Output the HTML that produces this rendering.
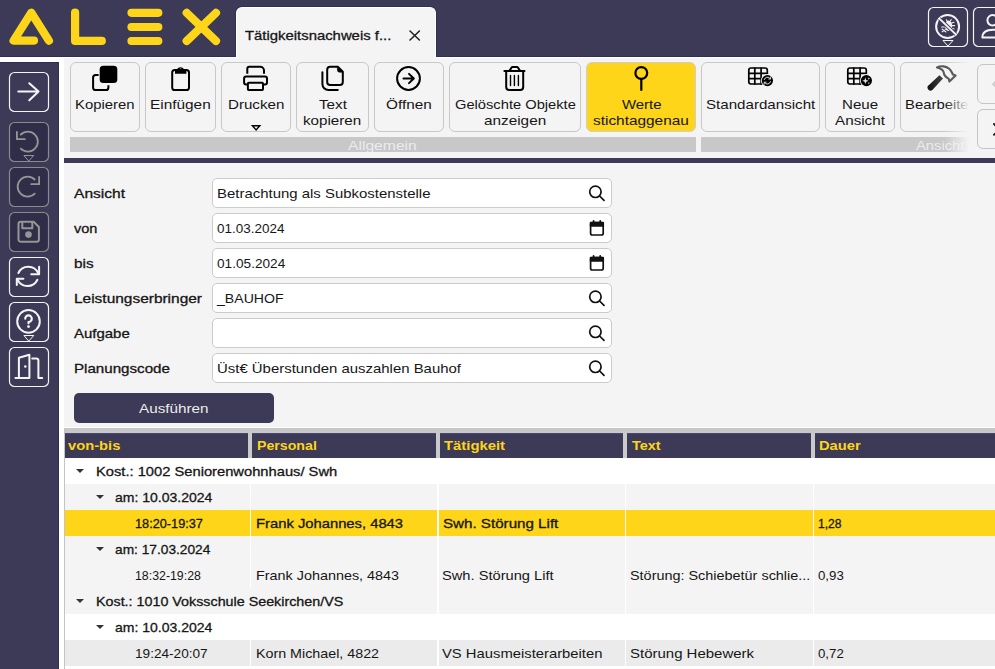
<!DOCTYPE html>
<html><head><meta charset="utf-8"><title>ALEX</title>
<style>
*{box-sizing:border-box;margin:0;padding:0}
html,body{width:995px;height:669px;overflow:hidden;background:#fff;font-family:"Liberation Sans",sans-serif;font-size:13px;color:#161616}
.abs{position:absolute}
#hdr{position:absolute;left:0;top:0;width:995px;height:57px;background:#3c3a57;border-bottom:1px solid #302e52}
#tab{position:absolute;left:236px;top:7px;width:200px;height:50px;background:#f4f4f4;border:1px solid #fff;border-bottom:none;border-radius:6px 6px 0 0;box-shadow:0 0 0 1px #312f53}
#tabb{position:absolute;left:0;top:57px;width:995px;height:1px;background:#fff}
#tabb:after{content:"";position:absolute;left:237px;top:0;width:198px;height:1px;background:#f4f4f4}
#side{position:absolute;left:0;top:62px;width:59px;height:607px;background:#3c3a57;border-top:1px solid #302e52;border-right:1px solid #302e52}
#main{position:absolute;left:64px;top:58px;width:931px;height:369px;background:#f4f4f4}
.tb{position:absolute;top:62px;height:70px;border:1px solid #c8c8c8;border-radius:6px;background:#f4f4f4}
.tb.on{background:#fed518;border-color:#cdcdd6}
.grp{position:absolute;top:137px;height:15px;background:#c8c8c8}
#fade{position:absolute;left:944px;top:58px;width:28px;height:96px;background:linear-gradient(to right,rgba(244,244,244,0),#f4f4f4 90%)}
#fade2{position:absolute;left:971px;top:58px;width:24px;height:96px;background:#f4f4f4}
.nav{position:absolute;left:977px;width:30px;height:40px;border:1px solid #c4c4c4;border-radius:6px;background:#f4f4f4}
#dline{position:absolute;left:64px;top:158px;width:931px;height:5px;background:#3c3a57}
.finput{position:absolute;left:212px;width:400px;height:30px;border:1px solid #cbcbcb;border-radius:5px;background:#fff}
#run{position:absolute;left:74px;top:393px;width:200px;height:30px;border-radius:5px;background:#3c3a57}
.t{position:absolute;display:block;transform-origin:0 50%;white-space:nowrap}
.m{-webkit-text-stroke:0.3px currentColor}
#grid{position:absolute;left:64px;top:427px;width:931px;height:242px;background:#fff;border-top:1px solid #fff}
#grid:before{content:"";position:absolute;left:0;top:0;width:931px;height:5px;background:#c8c8c8;border-bottom:1px solid #d8d8d8}
.th{position:absolute;top:433px;height:25px;background:#3c3a57;border-top:1px solid #4a4873}
.row{position:absolute;left:65px;width:930px;height:26px}
.vs{position:absolute;background:#fff}
.tri{position:absolute;width:0;height:0;border-left:4px solid transparent;border-right:4px solid transparent;border-top:4px solid #333}
#ico{position:absolute;left:0;top:0}
</style></head><body>
<div id="hdr"></div><div id="tab"></div><div id="tabb"></div><div id="side"></div><div id="main"></div>
<div class="tb " style="left:70px;width:70px"></div>
<div class="tb " style="left:145px;width:71px"></div>
<div class="tb " style="left:221px;width:70px"></div>
<div class="tb " style="left:296px;width:73px"></div>
<div class="tb " style="left:374px;width:70px"></div>
<div class="tb " style="left:449px;width:132px"></div>
<div class="tb on" style="left:586px;width:110px"></div>
<div class="tb " style="left:701px;width:119px"></div>
<div class="tb " style="left:825px;width:70px"></div>
<div class="tb " style="left:900px;width:82px"></div>
<div class="grp" style="left:70px;width:626px"></div><div class="grp" style="left:701px;width:294px"></div>
<span class="t " style="left:75.30px;top:97px;line-height:15px;font-size:13px;transform:scaleX(1.1442);">Kopieren</span>
<span class="t " style="left:150.00px;top:97px;line-height:15px;font-size:13px;transform:scaleX(1.1832);">Einfügen</span>
<span class="t " style="left:228.00px;top:97px;line-height:15px;font-size:13px;transform:scaleX(1.1632);">Drucken</span>
<span class="t " style="left:318.50px;top:97px;line-height:15px;font-size:13px;transform:scaleX(1.1681);">Text</span>
<span class="t " style="left:303.30px;top:113px;line-height:15px;font-size:13px;transform:scaleX(1.1663);">kopieren</span>
<span class="t " style="left:386.00px;top:97px;line-height:15px;font-size:13px;transform:scaleX(1.1778);">Öffnen</span>
<span class="t " style="left:454.50px;top:97px;line-height:15px;font-size:13px;transform:scaleX(1.1300);">Gelöschte Objekte</span>
<span class="t " style="left:483.80px;top:113px;line-height:15px;font-size:13px;transform:scaleX(1.1780);">anzeigen</span>
<span class="t " style="left:621.50px;top:97px;line-height:15px;font-size:13px;transform:scaleX(1.1483);">Werte</span>
<span class="t " style="left:593.00px;top:113px;line-height:15px;font-size:13px;transform:scaleX(1.1840);">stichtaggenau</span>
<span class="t " style="left:706.10px;top:97px;line-height:15px;font-size:13px;transform:scaleX(1.1628);">Standardansicht</span>
<span class="t " style="left:842.30px;top:97px;line-height:15px;font-size:13px;transform:scaleX(1.1608);">Neue</span>
<span class="t " style="left:834.80px;top:113px;line-height:15px;font-size:13px;transform:scaleX(1.1714);">Ansicht</span>
<span class="t " style="left:905.00px;top:97px;line-height:15px;font-size:13px;transform:scaleX(1.1431);">Bearbeiten</span>
<span class="t " style="left:348.20px;top:138px;line-height:15px;font-size:13px;transform:scaleX(1.2049);color:#ebebf0;">Allgemein</span>
<span class="t " style="left:916.20px;top:138px;line-height:15px;font-size:13px;transform:scaleX(1.1362);color:#ebebf0;">Ansicht</span>
<div class="abs" style="left:64px;top:152px;width:931px;height:6px;background:#f4f4f4"></div>
<div id="fade"></div><div id="fade2"></div>
<div class="nav" style="top:64px"></div><div class="nav" style="top:109px"></div>
<div id="dline"></div>
<span class="t m" style="left:244.90px;top:28px;line-height:15px;font-size:13px;transform:scaleX(1.1439);">Tätigkeitsnachweis f...</span>
<div class="finput" style="top:178px"></div>
<span class="t m" style="left:74.00px;top:186px;line-height:15px;font-size:13px;transform:scaleX(1.1972);">Ansicht</span>
<span class="t " style="left:216.80px;top:186px;line-height:15px;font-size:13px;transform:scaleX(1.1492);">Betrachtung als Subkostenstelle</span>
<div class="finput" style="top:213px"></div>
<span class="t m" style="left:74.00px;top:221px;line-height:15px;font-size:13px;transform:scaleX(1.1143);">von</span>
<span class="t " style="left:216.80px;top:221px;line-height:15px;font-size:13px;transform:scaleX(1.0353);">01.03.2024</span>
<div class="finput" style="top:248px"></div>
<span class="t m" style="left:74.00px;top:256px;line-height:15px;font-size:13px;transform:scaleX(1.1807);">bis</span>
<span class="t " style="left:216.80px;top:256px;line-height:15px;font-size:13px;transform:scaleX(1.0492);">01.05.2024</span>
<div class="finput" style="top:283px"></div>
<span class="t m" style="left:74.00px;top:291px;line-height:15px;font-size:13px;transform:scaleX(1.1885);">Leistungserbringer</span>
<span class="t " style="left:217.02px;top:291px;line-height:15px;font-size:13px;transform:scaleX(1.0844);">_BAUHOF</span>
<div class="finput" style="top:318px"></div>
<span class="t m" style="left:74.00px;top:326px;line-height:15px;font-size:13px;transform:scaleX(1.1508);">Aufgabe</span>
<div class="finput" style="top:353px"></div>
<span class="t m" style="left:74.00px;top:361px;line-height:15px;font-size:13px;transform:scaleX(1.1638);">Planungscode</span>
<span class="t " style="left:216.80px;top:361px;line-height:15px;font-size:13px;transform:scaleX(1.1482);">Üst€ Überstunden auszahlen Bauhof</span>
<div id="run"></div>
<span class="t " style="left:139.20px;top:401px;line-height:15px;font-size:13px;transform:scaleX(1.1720);color:#ececec;">Ausführen</span>
<div id="grid"></div>
<div class="abs" style="left:64px;top:433px;width:931px;height:25px;background:#cacaca"></div>
<div class="th" style="left:65px;width:183px"></div>
<div class="th" style="left:252px;width:184px"></div>
<div class="th" style="left:440px;width:183px"></div>
<div class="th" style="left:627px;width:184px"></div>
<div class="th" style="left:815px;width:180px"></div>
<span class="t " style="left:68.40px;top:438px;line-height:15px;font-size:13px;transform:scaleX(1.1320);font-weight:bold;color:#fed518;">von-bis</span>
<span class="t " style="left:256.60px;top:438px;line-height:15px;font-size:13px;transform:scaleX(1.0893);font-weight:bold;color:#fed518;">Personal</span>
<span class="t " style="left:443.70px;top:438px;line-height:15px;font-size:13px;transform:scaleX(1.1421);font-weight:bold;color:#fed518;">Tätigkeit</span>
<span class="t " style="left:631.80px;top:438px;line-height:15px;font-size:13px;transform:scaleX(1.1085);font-weight:bold;color:#fed518;">Text</span>
<span class="t " style="left:818.70px;top:438px;line-height:15px;font-size:13px;transform:scaleX(1.1304);font-weight:bold;color:#fed518;">Dauer</span>
<div class="row" style="top:458px;background:#fff"></div>
<div class="row" style="top:484px;background:#f4f4f4"></div>
<div class="row" style="top:510px;background:#fed518"></div>
<div class="row" style="top:536px;background:#f4f4f4"></div>
<div class="row" style="top:562px;background:#f4f4f4"></div>
<div class="row" style="top:588px;background:#f4f4f4"></div>
<div class="row" style="top:614px;background:#fff"></div>
<div class="row" style="top:640px;background:#ebebeb"></div>
<div class="vs" style="left:250px;width:1px;top:484px;height:130px"></div>
<div class="vs" style="left:250px;width:1px;top:640px;height:26px"></div>
<div class="vs" style="left:437px;width:2px;top:484px;height:130px"></div>
<div class="vs" style="left:437px;width:2px;top:640px;height:26px"></div>
<div class="vs" style="left:625px;width:1px;top:484px;height:130px"></div>
<div class="vs" style="left:625px;width:1px;top:640px;height:26px"></div>
<div class="vs" style="left:812.5px;width:1.5px;top:484px;height:130px"></div>
<div class="vs" style="left:812.5px;width:1.5px;top:640px;height:26px"></div>
<div class="abs" style="left:250px;top:588px;width:1px;height:26px;background:#f4f4f4"></div>
<div class="tri" style="left:76px;top:469px"></div>
<span class="t m" style="left:95.80px;top:464px;line-height:15px;font-size:13px;transform:scaleX(1.1313);">Kost.: 1002 Seniorenwohnhaus/ Swh</span>
<div class="tri" style="left:96px;top:495px"></div>
<span class="t m" style="left:114.60px;top:490px;line-height:15px;font-size:13px;transform:scaleX(1.0775);">am: 10.03.2024</span>
<span class="t m" style="left:135.20px;top:516px;line-height:15px;font-size:13px;transform:scaleX(0.9784);">18:20-19:37</span>
<span class="t m" style="left:255.80px;top:516px;line-height:15px;font-size:13px;transform:scaleX(1.1368);">Frank Johannes, 4843</span>
<span class="t m" style="left:442.90px;top:516px;line-height:15px;font-size:13px;transform:scaleX(1.1646);">Swh. Störung Lift</span>
<span class="t m" style="left:817.70px;top:516px;line-height:15px;font-size:13px;transform:scaleX(0.9289);">1,28</span>
<div class="tri" style="left:96px;top:547px"></div>
<span class="t m" style="left:114.60px;top:542px;line-height:15px;font-size:13px;transform:scaleX(1.0554);">am: 17.03.2024</span>
<span class="t " style="left:135.20px;top:568px;line-height:15px;font-size:13px;transform:scaleX(0.9496);">18:32-19:28</span>
<span class="t " style="left:255.80px;top:568px;line-height:15px;font-size:13px;transform:scaleX(1.1059);">Frank Johannes, 4843</span>
<span class="t " style="left:442.30px;top:568px;line-height:15px;font-size:13px;transform:scaleX(1.1273);">Swh. Störung Lift</span>
<span class="t " style="left:630.00px;top:568px;line-height:15px;font-size:13px;transform:scaleX(1.1089);">Störung: Schiebetür schlie...</span>
<span class="t " style="left:817.60px;top:568px;line-height:15px;font-size:13px;transform:scaleX(1.0198);">0,93</span>
<div class="tri" style="left:76px;top:599px"></div>
<span class="t m" style="left:95.80px;top:594px;line-height:15px;font-size:13px;transform:scaleX(1.1001);">Kost.: 1010 Voksschule Seekirchen/VS</span>
<div class="tri" style="left:96px;top:625px"></div>
<span class="t m" style="left:114.60px;top:620px;line-height:15px;font-size:13px;transform:scaleX(1.0775);">am: 10.03.2024</span>
<span class="t " style="left:135.20px;top:646px;line-height:15px;font-size:13px;transform:scaleX(1.0476);">19:24-20:07</span>
<span class="t " style="left:255.80px;top:646px;line-height:15px;font-size:13px;transform:scaleX(1.0982);">Korn Michael, 4822</span>
<span class="t " style="left:442.30px;top:646px;line-height:15px;font-size:13px;transform:scaleX(1.1384);">VS Hausmeisterarbeiten</span>
<span class="t " style="left:630.00px;top:646px;line-height:15px;font-size:13px;transform:scaleX(1.1521);">Störung Hebewerk</span>
<span class="t " style="left:817.60px;top:646px;line-height:15px;font-size:13px;transform:scaleX(1.0198);">0,72</span>
<div class="abs" style="left:64px;top:428px;width:1px;height:241px;background:#c4c4c4"></div>
<svg id="ico" width="995" height="669" viewBox="0 0 995 669" fill="none" stroke-linecap="round" stroke-linejoin="round">
<defs>
<linearGradient id="hg" x1="0" y1="0" x2="1" y2="0"><stop offset="0" stop-color="#111"/><stop offset="1" stop-color="#444"/></linearGradient>
</defs>
<!-- logo -->
<g stroke="#fed518" stroke-width="8.2">
<path d="M48.9 40.6 L31.3 12.8 L13.6 40.6 H34"/>
<path d="M75.1 12.6 V40.9 H101.8"/>
<path d="M131.5 12.8 H158.3 M131.5 27 H158.3 M131.5 41 H158.3"/>
<path d="M186.7 12.9 L216 41 M216 12.9 L186.7 41"/>
</g>
<!-- tab close X -->
<path d="M410 31 L419.4 40 M419.4 31 L410 40" stroke="#1d1d1d" stroke-width="1.5"/>
<!-- top right buttons -->
<g stroke="#f4f4f4">
<rect x="928.5" y="7.5" width="39" height="39" rx="5" stroke-width="1.2"/>
<rect x="973.5" y="7.5" width="39" height="39" rx="5" stroke-width="1.2"/>
<circle cx="947.6" cy="26.5" r="11.5" stroke-width="2"/>
<path d="M939.4 18.6 L955.8 34.4" stroke-width="2"/>
<path d="M943.4 40.5 H953 L948.2 45.8 Z" stroke-width="1" stroke-linejoin="miter"/>
<circle cx="992.6" cy="20.3" r="5.2" stroke-width="2"/>
<path d="M982.4 37.5 C982.4 32 987 29.8 993 29.8 H996 V37.5 Z" stroke-width="2"/>
</g>
<!-- bug -->
<g fill="#f4f4f4" stroke="#f4f4f4" stroke-width="1.1">
<ellipse cx="948.5" cy="25.8" rx="3.6" ry="5.2" stroke="none"/>
<path d="M947 20.8 L946.4 19.8 M950.4 20.8 L951.2 19.6 M951.6 23 L954 22.2 M952 25.6 H954.6 M951.6 28.2 L954 29 M944.4 27 H941.6 M945.4 29.6 L942.2 31.8 M942.2 29.2 L946 32" fill="none"/>
</g>
<path d="M939.4 18.6 L955.8 34.4" stroke="#3c3a57" stroke-width="3.6" stroke-linecap="butt"/>
<path d="M939.4 18.6 L955.8 34.4" stroke="#f4f4f4" stroke-width="2"/>
<!-- sidebar buttons -->
<g stroke-width="1.2">
<rect x="9.5" y="72.5" width="39" height="39" rx="5" stroke="#f4f4f4"/>
<rect x="9.5" y="122.5" width="39" height="39" rx="5" stroke="#8a8a8c" fill="#2f2d48"/>
<rect x="9.5" y="167.5" width="39" height="39" rx="5" stroke="#8a8a8c" fill="#2f2d48"/>
<rect x="9.5" y="212.5" width="39" height="39" rx="5" stroke="#8a8a8c" fill="#2f2d48"/>
<rect x="9.5" y="257.5" width="39" height="39" rx="5" stroke="#f4f4f4"/>
<rect x="9.5" y="302.5" width="39" height="39" rx="5" stroke="#f4f4f4"/>
<rect x="9.5" y="347.5" width="39" height="39" rx="5" stroke="#f4f4f4"/>
</g>
<!-- arrow right -->
<path d="M18.3 91.5 H38.5 M29.3 83.3 L38.5 91.5 L29.3 100.3" stroke="#f4f4f4" stroke-width="2.1"/>
<!-- undo -->
<g stroke="#959595" stroke-width="1.8">
<path d="M16.9 131.8 V139.2 H24.8"/>
<path d="M20.8 134.5 A10 10 0 1 1 20.8 148.7"/>
<path d="M24.3 155.5 H33.8 L29 160.8 Z" stroke-width="1" stroke-linejoin="miter"/>
<!-- redo -->
<path d="M39.1 176.8 V184.2 H31.2"/>
<path d="M34.7 179.5 A10 10 0 1 0 34.7 193.7"/>
<!-- save -->
<path d="M18.5 224 a2.3 2.3 0 0 1 2.3 -2.3 H33.6 L38.9 227 V239.5 a2.3 2.3 0 0 1 -2.3 2.3 H20.8 a2.3 2.3 0 0 1 -2.3 -2.3 Z" stroke-width="2"/>
<path d="M22.3 222 V228.2 H32.3 V222" stroke-width="2"/>
<circle cx="28.5" cy="234.6" r="3.3" fill="#959595" stroke="none"/>
</g>
<!-- refresh -->
<g stroke="#f4f4f4" stroke-width="2">
<path d="M39.1 266.8 V274.3 H31.2"/>
<path d="M18.4 273 A10.9 10.9 0 0 1 38.3 273.4"/>
<path d="M16.8 285 V278.8 H23.4"/>
<path d="M37.4 279.8 A10.9 10.9 0 0 1 17.6 279.6"/>
<!-- help -->
<circle cx="28.5" cy="321.4" r="11.3"/>
<path d="M25.2 318.6 A3.3 3.3 0 1 1 28.5 322 V323.3" stroke-width="2.2"/>
<circle cx="28.5" cy="326.6" r="1.4" fill="#f4f4f4" stroke="none"/>
<path d="M24.3 335.5 H33.8 L29 340.8 Z" stroke-width="1" stroke-linejoin="miter"/>
<!-- door -->
<path d="M15.4 377.9 H29.4 M18.9 377.9 V357.8 L29.4 354.8 V377.9"/>
<path d="M32.2 358.5 H36.4 a2 2 0 0 1 2 2 V377.9 H42.2"/>
<circle cx="25.3" cy="366.5" r="1.3" fill="#f4f4f4" stroke="none"/>
</g>
<!-- toolbar icons -->
<g stroke="#000" stroke-width="2">
<!-- copy -->
<rect x="99.7" y="65.8" width="17.6" height="17.3" rx="3.6" fill="#000" stroke="none"/>
<path d="M98.6 74.9 H95.7 a2.6 2.6 0 0 0 -2.6 2.6 V87.4 a2.6 2.6 0 0 0 2.6 2.6 H105.8 a2.6 2.6 0 0 0 2.6 -2.6 V85.2" stroke-linecap="butt"/>
<!-- clipboard -->
<rect x="172.2" y="69.9" width="16.8" height="20.1" rx="2.6"/>
<path d="M175 73.7 V70.2 H176.9 A3.7 3.7 0 0 1 184.1 70.2 H186.4 V73.7 Z M180.5 68.6 a1.15 1.15 0 1 0 0 2.3 a1.15 1.15 0 1 0 0 -2.3 Z" fill="#000" fill-rule="evenodd" stroke="none"/>
<!-- printer -->
<path d="M247.3 73.8 V68.8 a2 2 0 0 1 2 -2 H260.2 a3.8 3.8 0 0 1 3.8 3.8 V73.8" stroke-linecap="butt"/>
<path d="M248 84.6 H246.1 a2 2 0 0 1 -2 -2 V78.5 a2 2 0 0 1 2 -2 H265 a2 2 0 0 1 2 2 V82.6 a2 2 0 0 1 -2 2 H263" stroke-linecap="butt"/>
<rect x="247.9" y="82.8" width="15.1" height="7.2" rx="0.8"/>
<!-- text copy -->
<path d="M327.2 69.8 a3 3 0 0 1 3 -3 H337.8 L342.8 71.8 V81.9 a3 3 0 0 1 -3 3 H330.2 a3 3 0 0 1 -3 -3 Z"/>
<path d="M337.4 67 V70 a2.2 2.2 0 0 0 2.2 2.2 H342.6 Z" fill="#000" stroke-width="0.6"/>
<path d="M322.4 72.2 V84 a6 6 0 0 0 6 6 H337.8"/>
<!-- open -->
<circle cx="408.5" cy="78.5" r="11.4"/>
<path d="M403.5 78.5 H413.6 M409 73.9 L413.8 78.5 L409 83.1"/>
<!-- trash -->
<path d="M504.4 71 H524.5"/>
<path d="M509.6 70.6 L511.4 67.8 a1.6 1.6 0 0 1 1.3 -0.7 H516.8 a1.6 1.6 0 0 1 1.3 0.7 L519.9 70.6"/>
<path d="M506.2 71.2 V87 a3 3 0 0 0 3 3 H520.2 a3 3 0 0 0 3 -3 V71.2"/>
<path d="M510.5 75.4 V85.6 M514.4 75.4 V85.6 M518.4 75.4 V85.6" stroke-width="1.4"/>
<!-- pin -->
<circle cx="641.3" cy="73" r="5.9" stroke-width="2.2"/>
<path d="M641.3 79.4 V90" stroke-width="2.2"/>
</g>
<!-- table icons -->
<g id="tbl" stroke="#000" stroke-width="1.7">
<rect x="748.8" y="68" width="18.5" height="16" rx="2.2"/>
<path d="M754.8 68 V84 M761.1 68 V84 M748.8 73.4 H767.3 M748.8 78.6 H767.3"/>
</g>
<circle cx="767.4" cy="80.6" r="6.5" fill="#f4f4f4"/>
<circle cx="767.4" cy="80.6" r="5.6" fill="#000"/>
<path d="M764.3 79.6 A3.3 3.3 0 0 1 770.2 78.6 M770.5 81.6 A3.3 3.3 0 0 1 764.6 82.6 M770.6 77 V79 H768.7 M764.2 84.2 V82.2 H766.1" stroke="#e8e8e8" stroke-width="0.9"/>
<g stroke="#000" stroke-width="1.7">
<rect x="847.8" y="68" width="18.5" height="16" rx="2.2"/>
<path d="M853.8 68 V84 M860.1 68 V84 M847.8 73.4 H866.3 M847.8 78.6 H866.3"/>
</g>
<circle cx="866.4" cy="80.6" r="6.5" fill="#f4f4f4"/>
<circle cx="866.4" cy="80.6" r="5.6" fill="#000"/>
<path d="M865.4 77.6 L866.3 79.9 L868.6 80.8 L866.3 81.7 L865.4 84 L864.5 81.7 L862.2 80.8 L864.5 79.9 Z M868.8 77.2 L869.2 78.2 L870.2 78.6 L869.2 79 L868.8 80 L868.4 79 L867.4 78.6 L868.4 78.2 Z M868.8 82 L869.1 82.8 L869.9 83.1 L869.1 83.4 L868.8 84.2 L868.5 83.4 L867.7 83.1 L868.5 82.8 Z" fill="#ddd" stroke="none"/>
<!-- hammer -->
<path d="M927.6 86.2 L939.4 75.2 L943 78.6 L932.4 90 a3.2 3.2 0 0 1 -4.8 -3.8 Z" fill="url(#hg)" stroke="none"/>
<path d="M937 67.5 C940.5 65.6 946 66 949.2 68.8 C951.8 71 952 73.2 953 74.6 L955.6 75.4 L949.4 81.6 L948.6 78.6 C946.2 77.6 944 75.4 943.6 72.2 C943.2 69.8 941 68.6 937 67.5 Z" stroke="#5a5a5a" stroke-width="2.1"/>
<!-- drucken dropdown triangle -->
<path d="M252.4 125.7 H259.8 L256.1 129.9 Z" stroke="#000" stroke-width="1.4" stroke-linejoin="miter"/>
<!-- nav chevrons -->
<path d="M999.2 77.8 L993.2 84.2 L999.2 90.6" stroke="#cfcfcf" stroke-width="2"/>
<path d="M994 124 L999.4 129.4 L994 134.8" stroke="#222" stroke-width="2"/>
<!-- search icons -->
<g stroke="#111" stroke-width="1.7">
<circle cx="595.4" cy="191.8" r="5.7"/><path d="M599.6 196 L604 200.4"/>
<circle cx="595.4" cy="296.8" r="5.7"/><path d="M599.6 301 L604 305.4"/>
<circle cx="595.4" cy="331.8" r="5.7"/><path d="M599.6 336 L604 340.4"/>
<circle cx="595.4" cy="366.8" r="5.7"/><path d="M599.6 371 L604 375.4"/>
</g>
<!-- calendar icons -->
<g stroke="#111" stroke-width="1.7">
<rect x="590.6" y="222.6" width="12.6" height="12.4" rx="1.8"/>
<path d="M590.6 222.6 H603.2 V226 H590.6 Z M593.6 220.8 V223 M600.2 220.8 V223" fill="#111"/>
<rect x="590.6" y="257.6" width="12.6" height="12.4" rx="1.8"/>
<path d="M590.6 257.6 H603.2 V261 H590.6 Z M593.6 255.8 V258 M600.2 255.8 V258" fill="#111"/>
</g>
</svg>

</body></html>
